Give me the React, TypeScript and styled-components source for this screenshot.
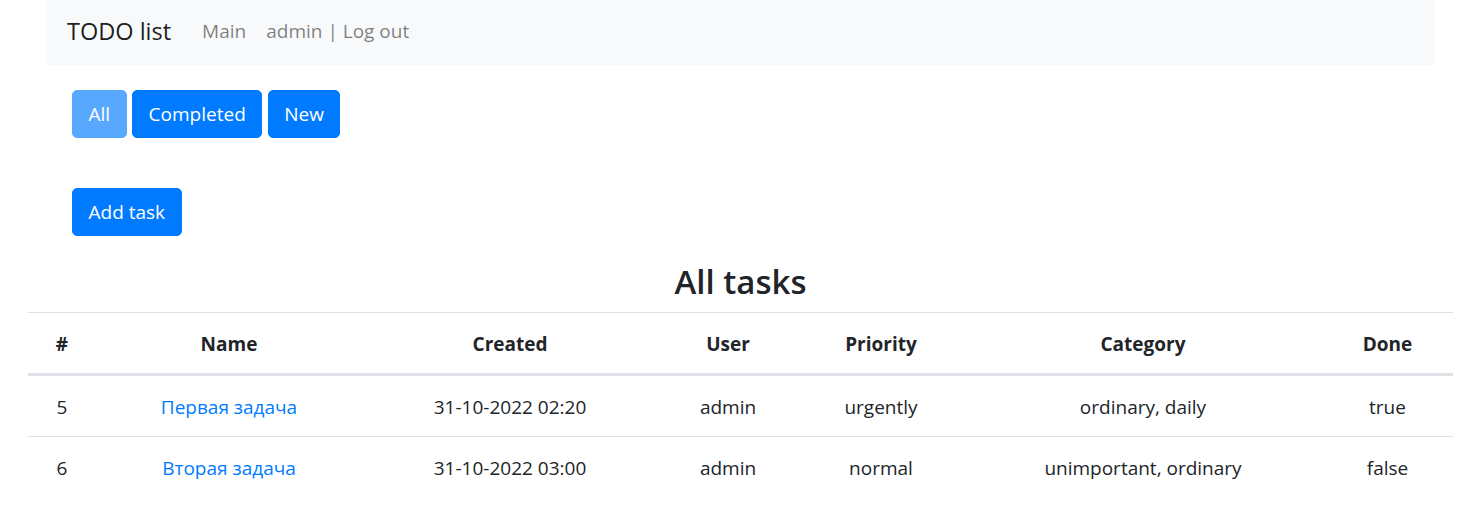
import React from "react";
import styled, { createGlobalStyle } from "styled-components";

const GlobalStyle = createGlobalStyle`
  html, body { margin: 0; padding: 0; background: #fff; }
  body {
    font-family: "Segoe UI", "Open Sans", "Noto Sans", sans-serif;
    font-size: 19px;
    line-height: 30px;
    color: #212529;
  }
  * { box-sizing: border-box; }
`;

const Page = styled.div`
  display: flex;
  flex-direction: column;
  width: 1471px;
`;

const Navbar = styled.nav`
  display: flex;
  align-items: center;
  height: 65px;
  margin: 0 37px 0 47px;
  padding: 0 20px;
  background: #f8f9fa;
`;

const Brand = styled.span`
  font-size: 23.5px;
  line-height: 30px;
  color: rgba(0, 0, 0, 0.9);
  margin-right: 21px;
  padding-bottom: 3px;
`;

const NavItem = styled.span`
  font-size: 19px;
  color: rgba(0, 0, 0, 0.5);
  padding: 0 10px;
  padding-bottom: 3px;
`;

const Section = styled.div<{ $top: number }>`
  display: flex;
  gap: 5.5px;
  padding-left: 72px;
  margin-top: ${(p) => p.$top}px;
`;

const Button = styled.button<{ $faded?: boolean }>`
  height: 48px;
  padding: 0 15.5px;
  font-family: inherit;
  font-size: 19px;
  line-height: 30px;
  color: #fff;
  background: #007bff;
  border: 1px solid #007bff;
  border-radius: 5px;
  opacity: ${(p) => (p.$faded ? 0.65 : 1)};
  cursor: pointer;
`;

const Heading = styled.h3`
  margin: 25px 0 9px 28px;
  width: 1425px;
  font-size: 33px;
  line-height: 42px;
  font-weight: 600;
  text-align: center;
  color: #212529;
`;

const Table = styled.table`
  width: 1425px;
  margin-left: 28px;
  border-collapse: collapse;
  table-layout: fixed;
`;

const Th = styled.th`
  padding: 16px 0 14px;
  font-weight: 700;
  text-align: center;
  border-top: 1px solid #dee2e6;
  border-bottom: 3px solid #dee2e6;
`;

const Td = styled.td`
  padding: 16px 0 14px;
  text-align: center;
  border-top: 1px solid #dee2e6;
`;

const Link = styled.a`
  color: #007bff;
  text-decoration: none;
`;

const cols = [68, 266, 296, 140, 166, 358, 131];
const headers = ["#", "Name", "Created", "User", "Priority", "Category", "Done"];

const rows = [
  { id: 5, name: "Первая задача", created: "31-10-2022 02:20", user: "admin", priority: "urgently", category: "ordinary, daily", done: "true" },
  { id: 6, name: "Вторая задача", created: "31-10-2022 03:00", user: "admin", priority: "normal", category: "unimportant, ordinary", done: "false" },
];

export default function App() {
  return (
    <>
      <GlobalStyle />
      <Page>
        <Navbar>
          <Brand>TODO list</Brand>
          <NavItem>Main</NavItem>
          <NavItem>admin | Log out</NavItem>
        </Navbar>
        <Section $top={25}>
          <Button $faded>All</Button>
          <Button>Completed</Button>
          <Button>New</Button>
        </Section>
        <Section $top={50}>
          <Button>Add task</Button>
        </Section>
        <Heading>All tasks</Heading>
        <Table>
          <colgroup>
            {cols.map((w, i) => (
              <col key={i} style={{ width: w }} />
            ))}
          </colgroup>
          <thead>
            <tr>
              {headers.map((h) => (
                <Th key={h}>{h}</Th>
              ))}
            </tr>
          </thead>
          <tbody>
            {rows.map((r) => (
              <tr key={r.id}>
                <Td>{r.id}</Td>
                <Td>
                  <Link href="#">{r.name}</Link>
                </Td>
                <Td>{r.created}</Td>
                <Td>{r.user}</Td>
                <Td>{r.priority}</Td>
                <Td>{r.category}</Td>
                <Td>{r.done}</Td>
              </tr>
            ))}
          </tbody>
        </Table>
      </Page>
    </>
  );
}
